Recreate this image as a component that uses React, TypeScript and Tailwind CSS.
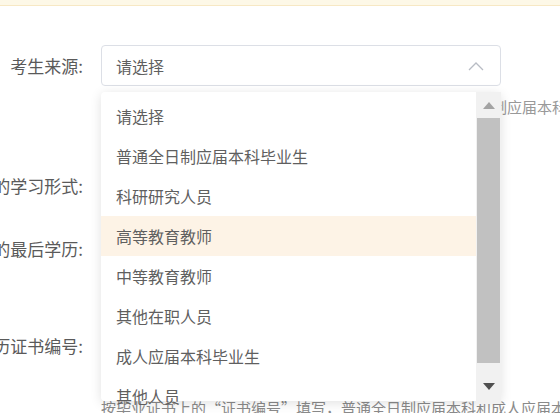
import React from 'react';

const OPTIONS = [
  '请选择',
  '普通全日制应届本科毕业生',
  '科研研究人员',
  '高等教育教师',
  '中等教育教师',
  '其他在职人员',
  '成人应届本科毕业生',
  '其他人员',
];

const FONT = { fontFamily: '"Noto Sans CJK SC", "Noto Sans", sans-serif' };

const FormRow = ({ label, children, className = '' }: { label: string; children: React.ReactNode; className?: string }) => (
  <div className={`flex items-start ${className}`}>
    <div className="w-[85px] shrink-0 h-[41px] pr-[2px] flex items-center justify-end whitespace-nowrap text-[17px] text-[#5a5a5a]">
      {label}
    </div>
    <div className="ml-[16px] w-[400px] shrink-0">{children}</div>
  </div>
);

const Dropdown = () => (
  <div className="absolute left-[101px] top-[92px] w-[400px] h-[309px] bg-white rounded-[4px] shadow-[0_2px_12px_rgba(0,0,0,0.12)] flex">
    <ul className="flex-1 pt-[4px]">
      {OPTIONS.map((opt, i) => (
        <li
          key={opt}
          className={`h-[40px] flex items-center pl-[15px] text-[16px] text-[#5f5f5f] whitespace-nowrap ${
            i === 3 ? 'bg-[#fdf3e6]' : ''
          }`}
        >
          {opt}
        </li>
      ))}
    </ul>
    <div className="w-[25px] h-[312px] bg-[#f1f1f1] flex flex-col items-center">
      <div className="h-[26px] w-full flex items-center justify-center">
        <svg width="12" height="7" viewBox="0 0 12 7">
          <polygon points="6,0 12,7 0,7" fill="#a3a3a3" />
        </svg>
      </div>
      <div className="w-[23px] h-[245px] bg-[#c1c1c1]" />
      <div className="flex-1 w-full flex items-center justify-center pt-[6px]">
        <svg width="12" height="7" viewBox="0 0 12 7">
          <polygon points="0,0 12,0 6,7" fill="#505050" />
        </svg>
      </div>
    </div>
  </div>
);

export default function App() {
  return (
    <div className="relative w-[560px] h-[413px] overflow-hidden bg-white" style={FONT}>
      <div className="h-[6px] bg-[#fdf8e7] border-b border-[#f7e8c4]" />

      <div className="flex flex-col pt-[39px]">
        <FormRow label="考生来源:">
          <div className="h-[41px] border border-[#dcdfe6] rounded-[4px] flex items-center justify-between pl-[14px] pr-[16px]">
            <span className="text-[16px] text-[#5f5f5f]">请选择</span>
            <svg width="16" height="10" viewBox="0 0 16 10" fill="none">
              <polyline points="1,9 8,2 15,9" stroke="#b8bcc4" strokeWidth="1.3" />
            </svg>
          </div>
          <div className="mt-[13px] pl-[1px] text-[15px] leading-[15px] text-[#999] whitespace-nowrap">
            选择考生来源时请核对：若您为在校的学生请选择普通全日制应届本科毕业生
          </div>
        </FormRow>

        <FormRow label="考生的学习形式:" className="mt-[51px]">
          <div className="h-[41px] border border-[#dcdfe6] rounded-[4px]" />
        </FormRow>

        <FormRow label="考生的最后学历:" className="mt-[22px]">
          <div className="h-[41px] border border-[#dcdfe6] rounded-[4px]" />
        </FormRow>

        <FormRow label="最后学历证书编号:" className="mt-[56px]">
          <div className="h-[41px] border border-[#dcdfe6] rounded-[4px]" />
          <div className="mt-[34px] text-[15px] leading-[16px] text-[#8a8a8a] whitespace-nowrap">
            按毕业证书上的“证书编号”填写，普通全日制应届本科和成人应届本科毕业生可不填
          </div>
        </FormRow>
      </div>

      <Dropdown />
    </div>
  );
}
